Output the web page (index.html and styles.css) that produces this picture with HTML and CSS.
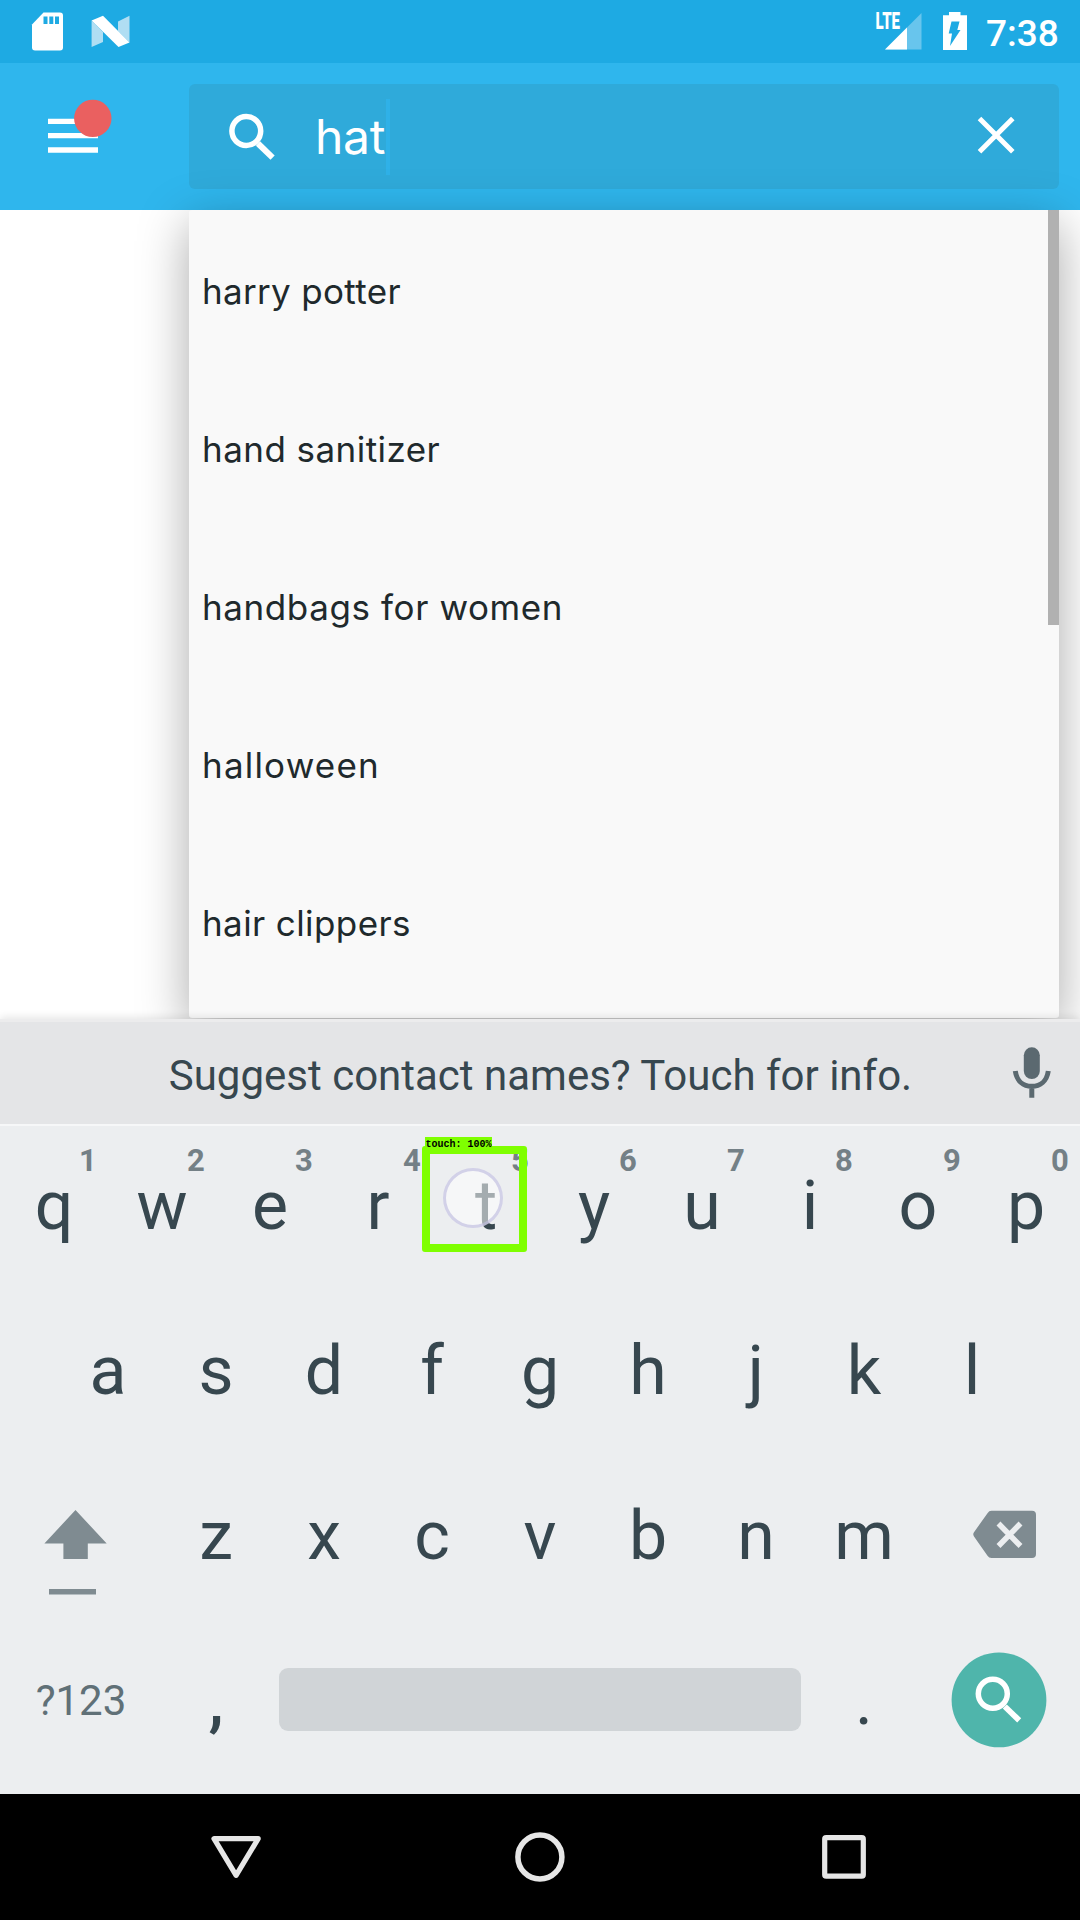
FILE: index.html
```html
<!DOCTYPE html>
<html lang="en">
<head>
<meta charset="utf-8">
<title>Search</title>
<link rel="stylesheet" href="styles.css">
</head>
<body>
<div class="screen">
  <header class="status">
    <svg class="status-left" width="140" height="63" viewBox="0 0 140 63">
      <path fill="#fff" d="M43.500 12.500H60a3 3 0 0 1 3 3V47.500a3 3 0 0 1-3 3H35a3 3 0 0 1-3-3V24.500z"/>
      <path fill="#1eaae3" d="M43.500 16.500h4v7.500h-4zM49.300 16.500h4v7.500h-4zM55 16.500h4v7.500h-4z"/>
      <path fill="#b0def3" d="M91.600 20.500L103 32v10l-11.400 5zM118 21.500l11.500-5.700V42.500L118 31z"/>
      <path fill="#fff" d="M91.600 20.500L103 15.700 129.500 42.500 118.500 47z"/>
    </svg>
    <div class="status-right">
      <svg width="94" height="63" viewBox="874 0 94 63">
        <text class="lte" x="875.500" y="29" textLength="24.500" lengthAdjust="spacingAndGlyphs">LTE</text>
        <path fill="#68c5ed" d="M921.500 13V49.500H885z"/>
        <path fill="#fff" d="M907 27.500v22H885z"/>
        <path fill="#fff" d="M949 12h11.500v3.200H967V50H943V15.200h6z"/>
        <path fill="#1eaae3" d="M951.500 21.500h8l-2.200 8.500h3.200l-10.500 16 2-12.500h-3.300z"/>
      </svg>
      <span class="clock">7:38</span>
    </div>
  </header>

  <div class="appbar">
    <div class="menu">
      <svg width="70" height="60" viewBox="46 96 70 60">
        <path fill="#fff" d="M48 118.700h50v5.300H48zM48 133h50v5.200H48zM48 147.300h50v5.500H48z"/>
        <circle cx="92.800" cy="118.400" r="18.700" fill="#ea6060"/>
      </svg>
    </div>
    <div class="search">
      <svg class="glass" width="50" height="50" viewBox="227 111 50 50" fill="none" stroke="#fff">
        <circle cx="246.300" cy="130" r="14.400" stroke-width="5.500"/>
        <path d="M258 142.500L272.600 156.700" stroke-width="6"/>
      </svg>
      <span class="query">hat</span><span class="caret"></span>
      <svg class="clear" width="40" height="44" viewBox="976 115 40 44" fill="none" stroke="#fff" stroke-width="5">
        <path d="M979.500 118.500l33.300 33.300M1012.800 118.500l-33.300 33.300"/>
      </svg>
    </div>
  </div>

  <main class="content">
    <ul class="suggestions">
      <li class="s1">harry potter</li>
      <li class="s2">hand sanitizer</li>
      <li class="s3">handbags for women</li>
      <li class="s4">halloween</li>
      <li class="s5">hair clippers</li>
    </ul>
  </main>

  <section class="keyboard">
    <div class="strip">
      <span>Suggest contact names? Touch for info.</span>
      <svg class="mic" width="42" height="54" viewBox="1011 1045 42 54">
        <rect x="1023.800" y="1047.300" width="16" height="31.700" rx="8" fill="#5b6970"/>
        <path d="M1015.300 1071c1.500 10 8 15.300 16.500 15.300s15-5.300 16.500-15.300M1031.800 1086v11.700" fill="none" stroke="#5b6970" stroke-width="5"/>
      </svg>
    </div>
    <div class="row">
      <div class="key"><i>1</i>q</div><div class="key"><i>2</i>w</div><div class="key"><i>3</i>e</div><div class="key"><i>4</i>r</div>
      <div class="key"><i>5</i>t
        <div class="touch"><span class="touch-label">touch: 100%</span><span class="touch-dot"></span></div>
      </div>
      <div class="key"><i>6</i>y</div><div class="key"><i>7</i>u</div><div class="key"><i>8</i>i</div><div class="key"><i>9</i>o</div><div class="key"><i>0</i>p</div>
    </div>
    <div class="row">
      <div class="key">a</div><div class="key">s</div><div class="key">d</div><div class="key">f</div><div class="key">g</div><div class="key">h</div><div class="key">j</div><div class="key">k</div><div class="key">l</div>
    </div>
    <div class="row">
      <div class="key wide">
        <svg width="162" height="165" viewBox="0 1454 162 165" fill="#7f8b91">
          <path d="M75.500 1510l31.200 33.500H87.800V1559H63.400v-15.500H44.400zM49 1589h47v5.400H49z"/>
        </svg>
      </div>
      <div class="key">z</div><div class="key">x</div><div class="key">c</div><div class="key">v</div><div class="key">b</div><div class="key">n</div><div class="key">m</div>
      <div class="key wide">
        <svg width="162" height="165" viewBox="918 1454 162 165">
          <path fill="#7f8b91" d="M991.500 1510.800H1032a4 4 0 0 1 4 4V1554a4 4 0 0 1-4 4H991.500q-2.500 0-4-2.300L974 1536.500q-1.500-2.200 0-4.300l13.500-19q1.500-2.400 4-2.400z"/>
          <path d="M998.500 1523.500l22 22.500M1020.500 1523.500l-22 22.500" stroke="#eceef0" stroke-width="5.500"/>
        </svg>
      </div>
    </div>
    <div class="row">
      <div class="key wide mode">?123</div>
      <div class="key comma">,</div>
      <div class="space"></div>
      <div class="key">.</div>
      <div class="key wide">
        <svg width="162" height="165" viewBox="918 1619 162 165" fill="none" stroke="#fff">
          <circle cx="999" cy="1699.900" r="47.400" fill="#4fb5ab" stroke="none"/>
          <circle cx="992.800" cy="1693.700" r="14.500" stroke-width="5.500"/>
          <path d="M1004.800 1706.500L1019.200 1720.300" stroke-width="5.800"/>
        </svg>
      </div>
    </div>
  </section>

  <nav class="navbar">
    <svg width="60" height="60" viewBox="206 1827 60 60"><path d="M214 1838.700h44.200L236.100 1875.300z" fill="none" stroke="#e6e6e6" stroke-width="5.200" stroke-linejoin="round"/></svg>
    <svg width="60" height="60" viewBox="510 1827 60 60"><circle cx="539.900" cy="1857" r="22" fill="none" stroke="#e6e6e6" stroke-width="5.500"/></svg>
    <svg width="60" height="60" viewBox="814 1827 60 60"><rect x="824.700" y="1837.600" width="38.600" height="38.600" rx="1.500" fill="none" stroke="#e6e6e6" stroke-width="5.200"/></svg>
  </nav>
</div>
</body>
</html>
```
FILE: styles.css
```css
* { box-sizing: border-box; }

body {
  margin: 0;
  background: #fff;
}

.screen {
  display: flex;
  flex-direction: column;
  width: 1080px;
  height: 1920px;
  overflow: hidden;
  font-family: Roboto, sans-serif;
}

.status {
  display: flex;
  justify-content: space-between;
  height: 63px;
  background: #1eaae3;
}

.status svg { display: block; }

.status-right {
  display: flex;
  align-items: center;
  gap: 18px;
  padding-right: 20px;
}

.lte {
  font: 900 23px Roboto, sans-serif;
  fill: #fff;
}

.clock {
  width: 74px;
  padding-top: 4px;
  color: #fff;
  font-size: 37px;
  font-weight: 500;
  line-height: 63px;
  white-space: nowrap;
}

.appbar {
  display: flex;
  height: 147px;
  padding: 21px 21px 21px 0;
  background: #2fb6ed;
}

.menu {
  width: 189px;
  padding: 12px 0 0 46px;
}

.search {
  display: flex;
  flex: 1;
  align-items: center;
  height: 105px;
  padding: 0 43px 0 38px;
  background: #2faada;
  border-radius: 6px;
}

.query {
  width: 71px;
  margin-left: 38px;
  color: #fff;
  font: 400 48px/60px Inter, sans-serif;
  letter-spacing: -0.3px;
}

.caret {
  width: 4px;
  height: 76px;
  background: #2fb1e8;
}

.clear { margin-left: auto; }

.content {
  display: flex;
  height: 809px;
  padding: 0 21px 0 189px;
}

.suggestions {
  position: relative;
  flex: 1;
  height: 808px;
  margin: 0;
  padding: 2px 0 0 13px;
  list-style: none;
  background: #f9f9f9;
  border-radius: 3px;
  box-shadow: 0 14px 50px rgba(0, 0, 0, 0.34);
  color: #20292c;
  font: 400 35px/158px Inter, sans-serif;
}

/* scroll thumb */
.suggestions::after {
  content: "";
  position: absolute;
  top: 0;
  right: 0;
  width: 11px;
  height: 415px;
  background: #b1b1b1;
}

.suggestions li { height: 158px; white-space: nowrap; }

.s1 { letter-spacing: 0.33px; }
.s2 { letter-spacing: 0.45px; }
.s3 { letter-spacing: 0.6px; }
.s4 { letter-spacing: 1.2px; }
.s5 { letter-spacing: 0.4px; }

.keyboard {
  position: relative;
  height: 775px;
  background: #eceef0;
  box-shadow: 0 -2px 8px rgba(0, 0, 0, 0.1);
  color: #37474f;
}

.strip {
  display: flex;
  justify-content: center;
  align-items: center;
  position: relative;
  height: 107px;
  padding: 5px 0 0 1px;
  background: #e4e5e7;
  border-top: 3px solid #ececed;
  border-bottom: 2px solid #f6f7f8;
  font-size: 42px;
  white-space: nowrap;
}

.mic {
  position: absolute;
  right: 27px;
  top: 23px;
}

.row {
  display: flex;
  justify-content: center;
  height: 165px;
}

.keyboard .row:nth-child(2) { margin-top: -2px; }

.key {
  position: relative;
  width: 108px;
  font-size: 68px;
  line-height: 165px;
  text-align: center;
}

.wide { width: 162px; }

.key svg { display: block; }

.key i {
  position: absolute;
  top: 19px;
  left: 68px;
  width: 40px;
  color: #748086;
  font-size: 31px;
  font-style: normal;
  font-weight: 700;
  line-height: 36px;
}

.mode {
  color: #607077;
  font-size: 42px;
  line-height: 163px;
}

.comma { font-weight: 500; }

.space {
  width: 522px;
  height: 63px;
  margin: 49px 9px 0;
  background: #d0d4d7;
  border-radius: 9px;
}

.touch {
  position: absolute;
  z-index: 2;
  left: -10px;
  top: 22px;
  width: 105px;
  height: 106px;
  border: 8px solid #7fff00;
  border-radius: 3px;
}

.touch-label {
  position: absolute;
  left: -5px;
  top: -17px;
  width: 67px;
  height: 11px;
  background: #7fff00;
  color: #000;
  font: 700 10px/15px "Liberation Mono", monospace;
  white-space: nowrap;
}

.touch-dot {
  position: absolute;
  left: 13px;
  top: 14px;
  width: 60px;
  height: 60px;
  background: rgba(255, 255, 255, 0.55);
  border: 3px solid rgba(190, 187, 222, 0.65);
  border-radius: 50%;
}

.navbar {
  display: flex;
  justify-content: space-between;
  align-items: center;
  height: 126px;
  padding: 0 206px;
  background: #000;
}
```
